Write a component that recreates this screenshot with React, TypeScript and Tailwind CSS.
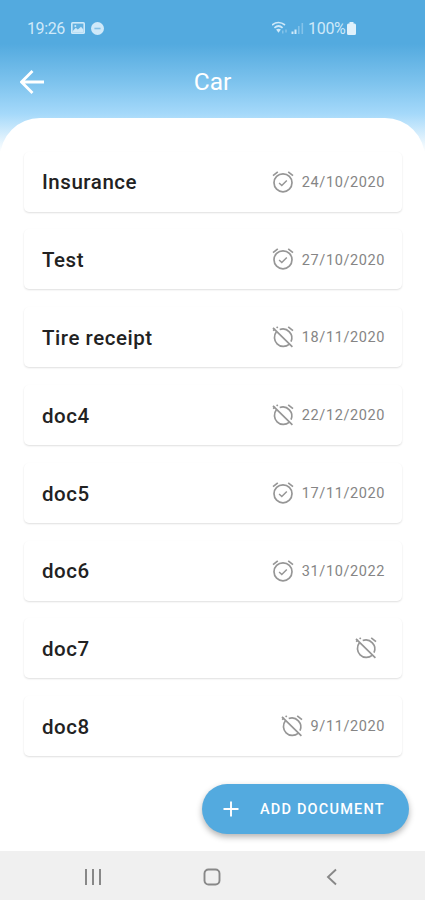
type Doc = {
  name: string;
  date?: string;
  alarm: boolean;
};

const docs: Doc[] = [
  { name: "Insurance", date: "24/10/2020", alarm: true },
  { name: "Test", date: "27/10/2020", alarm: true },
  { name: "Tire receipt", date: "18/11/2020", alarm: false },
  { name: "doc4", date: "22/12/2020", alarm: false },
  { name: "doc5", date: "17/11/2020", alarm: true },
  { name: "doc6", date: "31/10/2022", alarm: true },
  { name: "doc7", alarm: false },
  { name: "doc8", date: "9/11/2020", alarm: false },
];

const AlarmOn = () => (
  <svg className="mb-[2px] h-6 w-6" viewBox="0 0 24 24" fill="none" stroke="#969696" strokeWidth="1.7">
    <circle cx="12" cy="12.8" r="9" />
    <path d="M2 5.6 6.8 1.9M22 5.6 17.2 1.9" />
    <path d="m8.1 13 2.7 2.5 5-5" strokeWidth="1.5" />
  </svg>
);

const AlarmOff = () => (
  <svg className="mb-[2px] h-6 w-6" viewBox="0 0 24 24" fill="none" stroke="#969696" strokeWidth="1.7">
    <path d="M8.7 4.5A9 9 0 0 1 20 16.6" />
    <path d="M5.4 6.8A9 9 0 0 0 18.1 19.4" />
    <path d="m2 2.8 19.4 19M2.1 5.7 4.4 3.9M22 5.6 17.2 1.9M5.6 2.9 6.8 1.9" />
  </svg>
);

const StatusBar = () => (
  <div className="flex h-14 items-center justify-between pl-[27px] pr-[69px] text-[16px] text-[#cfe9f9]">
    <div className="flex items-center">
      <span className="mt-px w-[44px] tracking-[-0.4px]">19:26</span>
      <svg className="h-3 w-[14px]" viewBox="0 0 14 12">
        <rect width="14" height="12" rx="1.6" fill="#cfe9f9" />
        <rect x="1.6" y="1.6" width="10.8" height="8.8" fill="#62b0e0" />
        <path d="M1.6 9.2 4.8 5.8l2 1.8L10 4.8l2.4 2.6v3H1.6z" fill="#cfe9f9" />
        <circle cx="4.3" cy="3.9" r="1" fill="#cfe9f9" />
      </svg>
      <svg className="ml-[6px] h-[13px] w-[13px]" viewBox="0 0 13 13">
        <circle cx="6.5" cy="6.5" r="6.5" fill="#cfe9f9" />
        <path d="M3.4 6.5h6.2" stroke="#84c1e6" strokeWidth="1.6" />
      </svg>
    </div>
    <div className="flex items-center">
      <svg className="h-[14px] w-[34px]" viewBox="0 0 34 14" fill="none" stroke="#cfe9f9">
        <path d="M0 4q6.5-5 13 0M2.4 6.8q4.1-3.6 8.2 0" strokeWidth="1.7" />
        <path d="m4.1 8.6 2.4 3.2 2.4-3.2q-2.4-1.8-4.8 0z" fill="#cfe9f9" stroke="none" />
        <path d="M10.8 9.5v3M14 8.5v3" strokeWidth="1.2" opacity=".5" />
        <path d="M20.5 13v-2.5M23.5 13V8.5" strokeWidth="2" />
        <path d="M26.8 13V5M30.3 13V2" strokeWidth="1.6" opacity=".4" />
      </svg>
      <span className="ml-[2px] mt-px w-[39px] tracking-[-0.3px]">100%</span>
      <svg className="h-[13px] w-[9px]" viewBox="0 0 9 13" fill="#e0f1fb">
        <path d="M2.5 0h4v1.5h1a1.5 1.5 0 0 1 1.5 1.5v8.5a1.5 1.5 0 0 1-1.5 1.5h-6A1.5 1.5 0 0 1 0 11.5V3a1.5 1.5 0 0 1 1.5-1.5h1z" />
      </svg>
    </div>
  </div>
);

const DocCard = ({ doc }: { doc: Doc }) => (
  <li className="flex h-[60px] items-center justify-between rounded-[5px] bg-white pl-[18px] pr-[17px] pt-[2px] shadow-[0_1px_2px_rgba(0,0,0,0.13)]">
    <span className="text-[20.5px] font-medium tracking-[0.55px] text-[#222]">{doc.name}</span>
    <div className="flex items-center">
      {doc.alarm ? <AlarmOn /> : <AlarmOff />}
      <span className="ml-[7px] text-[14.5px] tracking-[0.6px] text-[#858585]">{doc.date}</span>
    </div>
  </li>
);

export default function App() {
  return (
    <main className="flex h-[900px] w-[425px] flex-col overflow-hidden bg-white font-[Roboto,sans-serif]">
      <div className="bg-[linear-gradient(#53aadf_0px,#53aadf_44px,#7fc4ee_84px,#a5d9fa_114px,#ffffff_152px)]">
        <StatusBar />
        {/* Title bar */}
        <header className="grid h-[62px] grid-cols-3 items-start pl-5 pr-5 text-white">
          <svg className="mt-[14px] h-6 w-6" viewBox="0 0 24 24" fill="none" stroke="white" strokeWidth="2.8">
            <path d="M24 12H2M12.5 1 1.5 12l11 11" />
          </svg>
          <h1 className="mt-[8px] text-center text-[24.5px] leading-9">Car</h1>
        </header>
        {/* Document list */}
        <section className="h-[733px] rounded-t-[40px] bg-white pl-6 pr-[23px] pt-[33.7px]">
          <ul className="flex flex-col gap-[17.8px]">
            {docs.map((doc) => (
              <DocCard key={doc.name} doc={doc} />
            ))}
          </ul>
          <button className="ml-auto mr-[-7px] mt-[27.3px] flex h-[50px] w-[207px] items-center rounded-full bg-[#53aadf] pl-[21px] text-white shadow-[0_3px_6px_rgba(0,0,0,0.3)]">
            <svg className="h-4 w-4" viewBox="0 0 16 16" stroke="white" strokeWidth="1.9">
              <path d="M8 .5v15M.5 8h15" />
            </svg>
            <span className="ml-[21px] mt-[2px] whitespace-nowrap text-[14.5px] font-medium tracking-[1.2px]">ADD DOCUMENT</span>
          </button>
        </section>
      </div>
      {/* System navigation */}
      <nav className="flex h-[49px] items-center bg-[#f0f0f0] pl-[84px] pt-[2px]">
        <svg className="h-[18px] w-[18px]" viewBox="0 0 18 18" stroke="#888" strokeWidth="2">
          <path d="M2 1v16M9 1v16M16 1v16" />
        </svg>
        <svg className="ml-[101px] h-[18px] w-[18px]" viewBox="0 0 18 18" fill="none" stroke="#888" strokeWidth="1.9">
          <rect x="1.5" y="1.5" width="15" height="15" rx="4" />
        </svg>
        <svg className="ml-[104.5px] h-[18px] w-[12px]" viewBox="0 0 12 18" fill="none" stroke="#888" strokeWidth="1.9">
          <path d="M10 1.5 2 9l8 7.5" />
        </svg>
      </nav>
    </main>
  );
}
